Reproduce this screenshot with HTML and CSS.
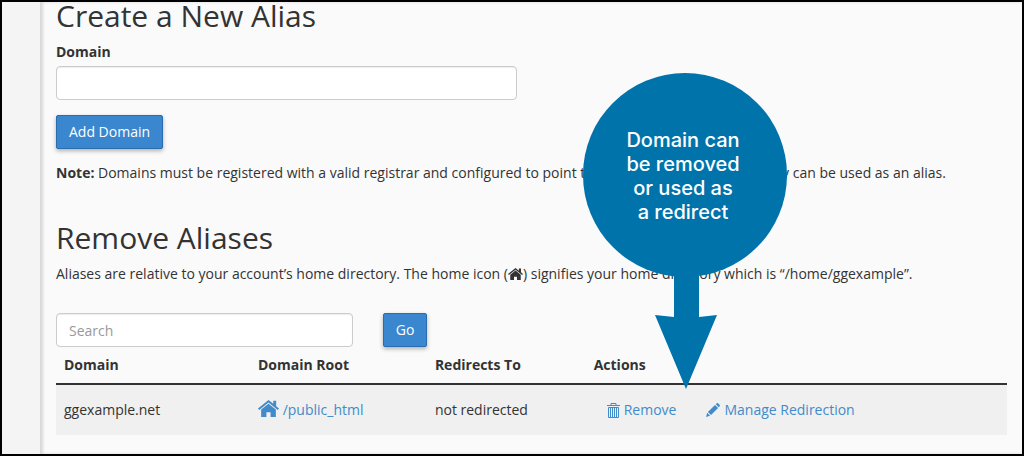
FILE: index.html
```html
<!DOCTYPE html>
<html lang="en">
<head>
    <meta charset="UTF-8">
    <meta name="viewport" content="width=device-width, initial-scale=1.0">
    <title>Aliases</title>
    <link rel="stylesheet" href="styles.css">
</head>
<body>
    <svg class="symbols" aria-hidden="true">
        <symbol id="home" viewBox="0 0 20 16">
            <path d="M10 0L0 8l1.200 1.400L10 2.400l8.800 7L20 8l-2.700-2.200V.6h-2.800v2.900z"/>
            <path d="M10 3.400L3 9V16h5v-4.500h4V16h5V9z"/>
        </symbol>
    </svg>

    <div class="page">
        <aside class="sidebar"></aside>
        <main class="content">
            <h2>Create a New Alias</h2>
            <form class="add-form">
                <label for="domain">Domain</label>
                <input type="text" id="domain" class="form-control">
                <button type="button" class="btn">Add Domain</button>
            </form>
            <p class="note"><strong>Note:</strong> Domains must be registered with a valid registrar and configured to point to your DNS servers before they can be used as an alias.</p>

            <h2>Remove Aliases</h2>
            <p class="intro">Aliases are relative to your account’s home directory. The home icon (<svg class="home-small"><use href="#home"/></svg>) signifies your home directory which is “/home/ggexample”.</p>

            <form class="search-form">
                <input type="text" class="form-control" placeholder="Search" aria-label="Search">
                <button type="button" class="btn">Go</button>
            </form>

            <table>
                <thead>
                    <tr>
                        <th class="col-domain">Domain</th>
                        <th class="col-root">Domain Root</th>
                        <th class="col-redirect">Redirects To</th>
                        <th>Actions</th>
                    </tr>
                </thead>
                <tbody>
                    <tr>
                        <td>ggexample.net</td>
                        <td><a href="#"><svg class="home-large"><use href="#home"/></svg> /public_html</a></td>
                        <td>not redirected</td>
                        <td>
                            <div class="actions">
                                <a href="#" class="btn-link">
                                    <svg class="icon-trash" viewBox="0 0 13 15" fill="none" stroke="currentColor">
                                        <path d="M0 2.500h13M4 2V.5h5V2M1.500 4.500h10v10h-10zM3.500 5v9M5.500 5v9M7.500 5v9M9.500 5v9"/>
                                    </svg>
                                    Remove
                                </a>
                                <a href="#" class="btn-link">
                                    <svg class="icon-pencil" viewBox="0 0 14 14" fill="currentColor">
                                        <path d="M0 14l1.200-4.200 2.900 2.900zM1.900 9L9 1.900 12.100 5 5 12.100zM9.800 1.200L10.700.3q.7-.6 1.400 0l1.600 1.600q.6.700 0 1.400l-.9.900z"/>
                                    </svg>
                                    Manage Redirection
                                </a>
                            </div>
                        </td>
                    </tr>
                </tbody>
            </table>
        </main>

        <div class="callout">
            <div class="bubble">Domain can<br>be removed<br>or used as<br>a redirect</div>
            <svg class="arrow" viewBox="0 0 62 117">
                <path d="M19 0h25v45l18-2-31 74L0 43l19 2z"/>
            </svg>
        </div>
    </div>
</body>
</html>
```
FILE: styles.css
```css
* {
    box-sizing: border-box;
}
body {
    margin: 0;
    font-family: "Open Sans", sans-serif;
    font-size: 14px;
    line-height: 20px;
    color: #333;
    background: #fafafa;
}
.symbols {
    display: none;
}
.page {
    position: relative;
    display: flex;
    min-height: 100vh;
    border: 2px solid #000;
}
.sidebar {
    width: 38px;
    flex-shrink: 0;
    background: #f4f4f4;
}
.content {
    flex: 1;
    padding: 0 15px 0 16px;
    box-shadow: inset 3px 0 3px #d8d8d8;
}
h2 {
    margin: 0 0 12px;
    font-size: 30px;
    line-height: 28px;
    font-weight: 400;
}
label {
    display: block;
    margin-bottom: 4px;
    font-weight: 700;
}
strong {
    font-weight: 700;
}
.form-control {
    display: block;
    height: 34px;
    padding: 6px 12px;
    font: inherit;
    color: #555;
    background: #fff;
    border: 1px solid #ccc;
    border-radius: 4px;
    box-shadow: inset 0 1px 1px rgba(0, 0, 0, 0.075);
}
.form-control::placeholder {
    color: #999;
}
.add-form .form-control {
    width: 48.5%;
    margin-bottom: 15px;
}
.btn {
    display: block;
    height: 34px;
    padding: 6px 12px;
    font: inherit;
    font-weight: 500;
    color: #fff;
    background: #3a87cf;
    border: 1px solid #2a6cad;
    border-radius: 2px;
    box-shadow: 0 2px 4px rgba(0, 0, 0, 0.3);
    cursor: pointer;
}
.note {
    margin: 14px 0 41px;
}
.intro {
    margin: 0 0 29px;
}
.search-form {
    display: flex;
    gap: 30px;
}
.search-form .form-control {
    width: 31.2%;
}
svg {
    fill: currentColor;
}
.home-small {
    width: 15px;
    height: 12px;
    vertical-align: -1px;
}
.home-large {
    width: 21px;
    height: 17px;
    vertical-align: -2px;
}
table {
    width: 100%;
    table-layout: fixed;
    border-collapse: separate;
    border-spacing: 0;
}
th {
    padding: 8px;
    text-align: left;
    font-weight: 700;
    border-bottom: 2px solid #333;
}
td {
    padding: 8px;
    background: #f0f0f0;
}
.col-domain {
    width: 20.4%;
}
.col-root {
    width: 18.6%;
}
.col-redirect {
    width: 16.7%;
}
a {
    color: #428bca;
    text-decoration: none;
}
.actions {
    display: flex;
    gap: 4px;
}
.btn-link {
    display: flex;
    gap: 4px;
    align-items: center;
    padding: 7px 13px;
}
.icon-trash {
    width: 13px;
    height: 15px;
    fill: none;
}
.icon-pencil {
    width: 14px;
    height: 14px;
}
/* bubble and arrow pointing at the row actions */
.callout {
    position: absolute;
    top: 71px;
    left: 581px;
    width: 204px;
    color: #0073ab;
}
.bubble {
    display: flex;
    align-items: center;
    justify-content: center;
    height: 204px;
    padding: 2px 4px 0 0;
    border-radius: 50%;
    background: #0073ab;
    color: #fff;
    font-family: Inter, sans-serif;
    font-size: 20px;
    line-height: 24px;
    font-weight: 500;
    text-align: center;
}
.arrow {
    display: block;
    width: 62px;
    height: 117px;
    margin: -5px 70px 0 72px;
}
```
